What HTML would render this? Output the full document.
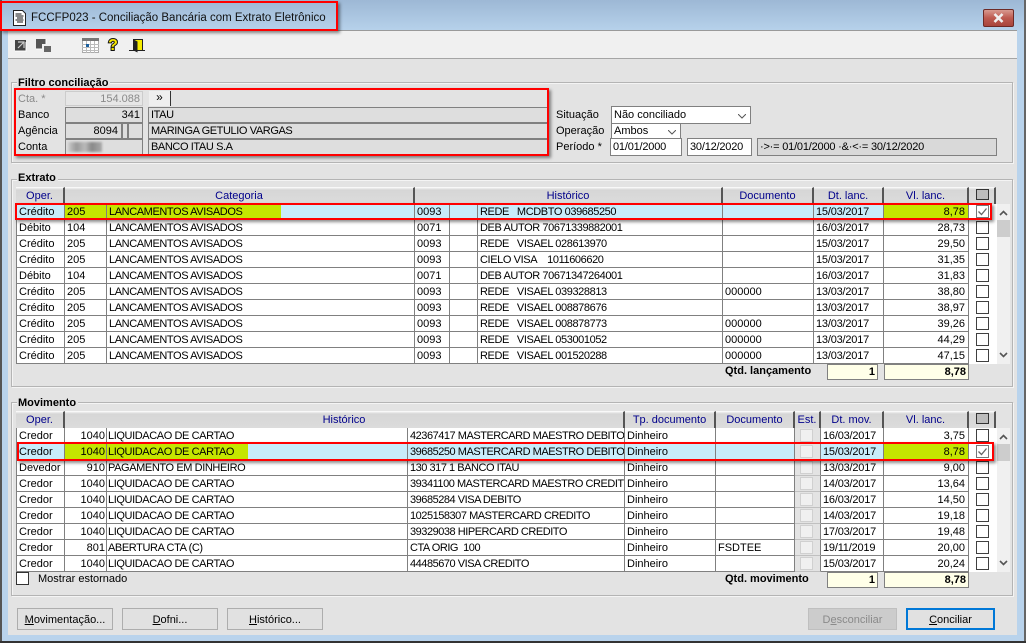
<!DOCTYPE html>
<html><head><meta charset="utf-8"><style>
*{box-sizing:border-box;margin:0;padding:0}
html,body{width:1026px;height:643px;overflow:hidden;background:#b9d3ec;font:11px "Liberation Sans",sans-serif;color:#000}
div,span,b,svg{position:absolute;white-space:nowrap}
#tb{left:0;top:0;width:1026px;height:31px;background:linear-gradient(#9db8d5,#b7d2eb)}
#body{left:8px;top:30px;width:1009px;height:605px;background:#e3e3e3;border-top:1px solid #9a9a9a}
#tool{left:8px;top:31px;width:1009px;height:28px;background:#f0f0f0;border-bottom:1px solid #a5a5a5}
.g{border:1px solid #b4b4b4;box-shadow:inset 1px 1px 0 #f4f4f4,1px 1px 0 #f4f4f4}
.lg{font-weight:bold;background:#e3e3e3;padding:0 2px 0 1px;line-height:13px;height:13px}
.rb{border:2px solid #f00;box-shadow:2px 2px 3px rgba(0,0,0,.45)}
.l{line-height:16px;height:14px}
.f{border:1px solid #808080;background:#dedede;line-height:15px;padding:0 2px;overflow:hidden}
.u{letter-spacing:-.4px}
.w{background:#fff}
.r{text-align:right}
.h{height:17px;line-height:16px;text-align:center;color:#00008b;background:linear-gradient(#f0f0f0 0,#d6d6d6 2px,#dcdcdc);border-right:2px solid #555;border-top:1px solid #f8f8f8}
.rw{left:0;width:1000px;height:16px}
.rw span{top:0;height:16px;line-height:17px;background:#fff;border-right:1px solid #808080;border-bottom:1px solid #808080;padding-left:2px;overflow:hidden}
.rw span:first-child{border-left:1px solid #808080}
#ex .rw span:nth-child(3),#ex .rw span:nth-child(6),#mv .rw span:nth-child(3){letter-spacing:-.4px}
#mv .rw span:nth-child(4){letter-spacing:-.47px}
.rw span:nth-child(8){letter-spacing:-.2px}
#ex .rw span:nth-child(1){left:16px;width:49px}
#ex .rw span:nth-child(2){left:65px;width:42px}
#ex .rw span:nth-child(3){left:107px;width:308px}
#ex .rw span:nth-child(4){left:415px;width:35px}
#ex .rw span:nth-child(5){left:450px;width:28px}
#ex .rw span:nth-child(6){left:478px;width:245px}
#ex .rw span:nth-child(7){left:723px;width:91px}
#ex .rw span:nth-child(8){left:814px;width:70px}
#ex .rw span:nth-child(9){left:884px;width:85px;text-align:right;padding-right:3px}
#mv .rw span:nth-child(1){left:16px;width:49px}
#mv .rw span:nth-child(2){left:65px;width:42px;text-align:right;padding-right:1px}
#mv .rw span:nth-child(3){left:107px;width:301px;padding-left:1px}
#mv .rw span:nth-child(4){left:408px;width:217px;padding-left:2px}
#mv .rw span:nth-child(5){left:625px;width:91px;padding-left:2px}
#mv .rw span:nth-child(6){left:716px;width:79px}
#mv .rw span:nth-child(7){left:795px;width:26px;background:#e3e3e3;border-bottom-color:#c0c0c0}
#mv .rw span:nth-child(8){left:821px;width:63px}
#mv .rw span:nth-child(9){left:884px;width:85px;text-align:right;padding-right:3px}
.rw span.s{background:#c8ecfa}
.rw span.y{background:linear-gradient(90deg,#c4e600 var(--p,100%),#c8ecfa var(--p,100%))}
.wh{background:#fff}
.ck{left:976px;width:13px;height:13px;background:#fff;border:1px solid #404040}
.sb{left:997px;width:13px;background:#f0f0f0}
.btn{top:608px;height:22px;border:1px solid #adadad;background:#e1e1e1;text-align:center;line-height:22px}
u{text-decoration:underline}
.sm{border:1px solid #808080;background:#ffffe8;font-weight:bold;text-align:right;padding-right:2px;line-height:14px;height:16px}
.ca{width:8px;height:5px}
.e{width:13px;height:13px;left:800px;background:#f0f0f0;border:1px solid #d0d0d0}
</style></head><body>
<div id="tb"></div>
<div style="left:0;top:0;width:2px;height:643px;background:#555"></div>
<div style="left:1024px;top:0;width:2px;height:643px;background:#666"></div>
<div style="left:0;top:641px;width:1026px;height:2px;background:#333"></div>
<div id="body"></div>
<div id="tool"></div>

<svg style="left:13px;top:10px" width="13" height="16" viewBox="0 0 13 16"><path d="M.5.500h9l3 3v12H.5z" fill="#fff" stroke="#222"/><path d="M2.500 4h6M2.500 6h8M4 8h6M2.500 10h8M4 12h6" stroke="#111"/></svg>
<div style="left:31px;top:11px;font-size:11.5px;line-height:15px;color:#111">FCCFP023 - Conciliação Bancária com Extrato Eletrônico</div>
<div style="left:983px;top:9px;width:31px;height:18px;border:1px solid #6d2a26;border-radius:2px;background:linear-gradient(#d89a90,#bd5a50 50%,#a8453c)"></div>
<svg style="left:991px;top:12px" width="15" height="12" viewBox="0 0 15 12"><path d="M3.500 2l8 8M11.500 2l-8 8" stroke="#f0f0f0" stroke-width="2.600"/></svg>
<div class="rb" style="left:0;top:1px;width:338px;height:30px"></div>

<svg style="left:14px;top:38px" width="14" height="16" viewBox="0 0 14 16"><rect x="1" y="2" width="11" height="11" fill="#444"/><path d="M1 13h11V4" fill="none" stroke="#fff"/><path d="M4 4h6v6M10 4L4 10" stroke="#ccc" stroke-width="1.200" fill="none"/></svg>
<svg style="left:35px;top:37px" width="17" height="16" viewBox="0 0 17 16"><path d="M1 2h10v5H7v5H1z" fill="#555"/><rect x="9" y="9" width="7" height="6" fill="#666"/><path d="M1 12h6M11 2v5" stroke="#fff"/></svg>
<svg style="left:82px;top:38px" width="17" height="15" viewBox="0 0 17 15"><rect x=".5" y=".5" width="16" height="14" fill="#fff" stroke="#aaa"/><rect x="0" y="0" width="17" height="3" fill="#777"/><path d="M4.500 3v12M8.500 3v12M12.500 3v12M0 6.500h17M0 9.500h17M0 12.500h17" stroke="#bbb"/><rect x="4" y="6" width="3" height="3" fill="#1b5f9e"/></svg>
<div style="left:106px;top:37px;font:bold 16px/17px 'Liberation Sans',sans-serif;color:#f7e600;-webkit-text-stroke:2px #111;paint-order:stroke fill;width:14px;text-align:center">?</div>
<svg style="left:129px;top:38px" width="16" height="16" viewBox="0 0 16 16"><path d="M4.500 1.500h9v11h-9z" fill="#f5ec00" stroke="#222"/><path d="M4.500 1.500l4 2v11l-4-2z" fill="#222"/><path d="M0 12.500h4M13 12.500h3" stroke="#222"/></svg>

<div class="g" style="left:11px;top:82px;width:1002px;height:81px"></div>
<div class="lg" style="left:17px;top:77px">Filtro conciliação</div>
<div class="l" style="left:18px;top:91px;color:#8a8a8a">Cta. *</div>
<div class="f r" style="left:65px;top:91px;width:78px;height:15px;color:#8a8a8a;background:#e6e6e6;border-color:#ccc">154.088</div>
<div style="left:149px;top:91px;width:22px;height:15px;background:#efefef;border-right:1px solid #333;text-align:center;line-height:13px;font-size:12px">»</div>
<div class="l" style="left:18px;top:107px">Banco</div>
<div class="f r" style="left:65px;top:107px;width:78px;height:16px">341</div>
<div class="f u" style="left:148px;top:107px;width:400px;height:16px">ITAU</div>
<div class="l" style="left:18px;top:123px">Agência</div>
<div class="f r" style="left:65px;top:123px;width:57px;height:16px;padding-right:3px">8094</div>
<div class="f" style="left:122px;top:123px;width:6px;height:16px"></div>
<div class="f" style="left:128px;top:123px;width:15px;height:16px"></div>
<div class="f u" style="left:148px;top:123px;width:400px;height:16px">MARINGA GETULIO VARGAS</div>
<div class="l" style="left:18px;top:139px">Conta</div>
<div class="f" style="left:65px;top:139px;width:78px;height:17px"></div>
<div class="f u" style="left:148px;top:139px;width:400px;height:17px;line-height:15px">BANCO ITAU S.A</div>
<div style="left:68px;top:142px;width:34px;height:10px;background:linear-gradient(90deg,#ccc,#999 25%,#bbb 50%,#888 70%,#aaa 100%);filter:blur(1px)"></div>
<div class="rb" style="left:14px;top:88px;width:535px;height:68px"></div>

<div class="l" style="left:556px;top:107px">Situação</div>
<div class="f w" style="left:611px;top:106px;width:140px;height:18px;line-height:16px">Não conciliado</div>
<svg class="ca" style="left:738px;top:114px" viewBox="0 0 8 5"><path d="M0 0l4 4 4-4" fill="none" stroke="#555"/></svg>
<div class="l" style="left:556px;top:123px">Operação</div>
<div class="f w" style="left:611px;top:123px;width:70px;height:16px;line-height:14px">Ambos</div>
<svg class="ca" style="left:668px;top:130px" viewBox="0 0 8 5"><path d="M0 0l4 4 4-4" fill="none" stroke="#555"/></svg>
<div class="l" style="left:556px;top:139px">Período *</div>
<div class="f w" style="left:610px;top:138px;width:72px;height:18px;line-height:17px;letter-spacing:-.2px">01/01/2000</div>
<div class="f w" style="left:687px;top:138px;width:65px;height:18px;line-height:17px;letter-spacing:-.2px">30/12/2020</div>
<div class="f" style="left:757px;top:138px;width:240px;height:18px;line-height:17px;background:#d9d9d9;letter-spacing:-.2px">·&gt;·= 01/01/2000 ·&amp;·&lt;·= 30/12/2020</div>

<div class="g" style="left:11px;top:179px;width:1002px;height:208px"></div>
<div class="lg" style="left:17px;top:172px">Extrato</div>
<div class="h" style="left:16px;top:187px;width:49px">Oper.</div>
<div class="h" style="left:65px;top:187px;width:350px">Categoria</div>
<div class="h" style="left:415px;top:187px;width:308px">Histórico</div>
<div class="h" style="left:723px;top:187px;width:91px">Documento</div>
<div class="h" style="left:814px;top:187px;width:70px">Dt. lanc.</div>
<div class="h" style="left:884px;top:187px;width:85px">Vl. lanc.</div>
<div class="h" style="left:969px;top:187px;width:27px"></div>
<div style="left:976px;top:189px;width:13px;height:11px;background:#bdbdbd;border:1px solid #333"></div>

<div class="wh" style="left:969px;top:204px;width:28px;height:160px"></div>
<div class="sb" style="top:204px;height:160px"></div>
<div style="left:997px;top:220px;width:13px;height:17px;background:#cdcdcd"></div>
<svg style="left:999px;top:210px" width="9" height="6" viewBox="0 0 9 6"><path d="M1 5l3.500-3.500L8 5" fill="none" stroke="#555" stroke-width="1.600"/></svg>
<svg style="left:999px;top:352px" width="9" height="6" viewBox="0 0 9 6"><path d="M1 1l3.500 3.500L8 1" fill="none" stroke="#555" stroke-width="1.600"/></svg>

<div id="ex" style="left:0;top:204px;width:1000px;height:160px">
<div class="rw" style="top:0"><span class="s">Crédito</span><span class="y">205</span><span class="y" style="--p:174px">LANCAMENTOS AVISADOS</span><span class="s">0093</span><span class="s"></span><span class="s">REDE &nbsp; MCDBTO 039685250</span><span class="s"></span><span class="s">15/03/2017</span><span class="y">8,78</span></div>
<div class="rw" style="top:16px"><span>Débito</span><span>104</span><span>LANCAMENTOS AVISADOS</span><span>0071</span><span></span><span>DEB AUTOR 70671339882001</span><span></span><span>16/03/2017</span><span>28,73</span></div>
<div class="rw" style="top:32px"><span>Crédito</span><span>205</span><span>LANCAMENTOS AVISADOS</span><span>0093</span><span></span><span>REDE &nbsp; VISAEL 028613970</span><span></span><span>15/03/2017</span><span>29,50</span></div>
<div class="rw" style="top:48px"><span>Crédito</span><span>205</span><span>LANCAMENTOS AVISADOS</span><span>0093</span><span></span><span>CIELO VISA &nbsp; &nbsp;1011606620</span><span></span><span>15/03/2017</span><span>31,35</span></div>
<div class="rw" style="top:64px"><span>Débito</span><span>104</span><span>LANCAMENTOS AVISADOS</span><span>0071</span><span></span><span>DEB AUTOR 70671347264001</span><span></span><span>16/03/2017</span><span>31,83</span></div>
<div class="rw" style="top:80px"><span>Crédito</span><span>205</span><span>LANCAMENTOS AVISADOS</span><span>0093</span><span></span><span>REDE &nbsp; VISAEL 039328813</span><span>000000</span><span>13/03/2017</span><span>38,80</span></div>
<div class="rw" style="top:96px"><span>Crédito</span><span>205</span><span>LANCAMENTOS AVISADOS</span><span>0093</span><span></span><span>REDE &nbsp; VISAEL 008878676</span><span></span><span>13/03/2017</span><span>38,97</span></div>
<div class="rw" style="top:112px"><span>Crédito</span><span>205</span><span>LANCAMENTOS AVISADOS</span><span>0093</span><span></span><span>REDE &nbsp; VISAEL 008878773</span><span>000000</span><span>13/03/2017</span><span>39,26</span></div>
<div class="rw" style="top:128px"><span>Crédito</span><span>205</span><span>LANCAMENTOS AVISADOS</span><span>0093</span><span></span><span>REDE &nbsp; VISAEL 053001052</span><span>000000</span><span>13/03/2017</span><span>44,29</span></div>
<div class="rw" style="top:144px"><span>Crédito</span><span>205</span><span>LANCAMENTOS AVISADOS</span><span>0093</span><span></span><span>REDE &nbsp; VISAEL 001520288</span><span>000000</span><span>13/03/2017</span><span>47,15</span></div>
</div>
<div class="ck" style="top:205px;border-color:#777"></div><svg style="left:977px;top:206px" width="11" height="11" viewBox="0 0 11 11"><path d="M1.500 5.500l3 3 5-6" fill="none" stroke="#666" stroke-width="1.300"/></svg>
<div class="ck" style="top:221px"></div><div class="ck" style="top:237px"></div><div class="ck" style="top:253px"></div><div class="ck" style="top:269px"></div><div class="ck" style="top:285px"></div><div class="ck" style="top:301px"></div><div class="ck" style="top:317px"></div><div class="ck" style="top:333px"></div><div class="ck" style="top:349px"></div>
<div class="rb" style="left:15px;top:203px;width:977px;height:17px"></div>
<b style="left:725px;top:364px;line-height:14px">Qtd. lançamento</b>
<div class="sm" style="left:827px;top:364px;width:51px">1</div>
<div class="sm" style="left:884px;top:364px;width:85px">8,78</div>

<div class="g" style="left:11px;top:402px;width:1002px;height:194px"></div>
<div class="lg" style="left:17px;top:397px">Movimento</div>
<div class="h" style="left:16px;top:411px;width:49px">Oper.</div>
<div class="h" style="left:65px;top:411px;width:560px">Histórico</div>
<div class="h" style="left:625px;top:411px;width:91px">Tp. documento</div>
<div class="h" style="left:716px;top:411px;width:79px">Documento</div>
<div class="h" style="left:795px;top:411px;width:26px">Est.</div>
<div class="h" style="left:821px;top:411px;width:63px">Dt. mov.</div>
<div class="h" style="left:884px;top:411px;width:85px">Vl. lanc.</div>
<div class="h" style="left:969px;top:411px;width:27px"></div>
<div style="left:976px;top:413px;width:13px;height:11px;background:#bdbdbd;border:1px solid #333"></div>

<div class="wh" style="left:969px;top:428px;width:28px;height:144px"></div>
<div class="sb" style="top:428px;height:144px"></div>
<div style="left:997px;top:444px;width:13px;height:17px;background:#cdcdcd"></div>
<svg style="left:999px;top:434px" width="9" height="6" viewBox="0 0 9 6"><path d="M1 5l3.500-3.500L8 5" fill="none" stroke="#555" stroke-width="1.600"/></svg>
<svg style="left:999px;top:560px" width="9" height="6" viewBox="0 0 9 6"><path d="M1 1l3.500 3.500L8 1" fill="none" stroke="#555" stroke-width="1.600"/></svg>

<div id="mv" style="left:0;top:428px;width:1000px;height:144px">
<div class="rw" style="top:0"><span>Credor</span><span>1040</span><span>LIQUIDACAO DE CARTAO</span><span>42367417 MASTERCARD MAESTRO DEBITO</span><span>Dinheiro</span><span></span><span></span><span>16/03/2017</span><span>3,75</span></div>
<div class="rw" style="top:16px"><span class="s">Credor</span><span class="y">1040</span><span class="y" style="--p:141px">LIQUIDACAO DE CARTAO</span><span class="s">39685250 MASTERCARD MAESTRO DEBITO</span><span class="s">Dinheiro</span><span class="s"></span><span></span><span class="s">15/03/2017</span><span class="y">8,78</span></div>
<div class="rw" style="top:32px"><span>Devedor</span><span>910</span><span>PAGAMENTO EM DINHEIRO</span><span>130 317 1 BANCO ITAU</span><span>Dinheiro</span><span></span><span></span><span>13/03/2017</span><span>9,00</span></div>
<div class="rw" style="top:48px"><span>Credor</span><span>1040</span><span>LIQUIDACAO DE CARTAO</span><span>39341100 MASTERCARD MAESTRO CREDITO</span><span>Dinheiro</span><span></span><span></span><span>14/03/2017</span><span>13,64</span></div>
<div class="rw" style="top:64px"><span>Credor</span><span>1040</span><span>LIQUIDACAO DE CARTAO</span><span>39685284 VISA DEBITO</span><span>Dinheiro</span><span></span><span></span><span>16/03/2017</span><span>14,50</span></div>
<div class="rw" style="top:80px"><span>Credor</span><span>1040</span><span>LIQUIDACAO DE CARTAO</span><span>1025158307 MASTERCARD CREDITO</span><span>Dinheiro</span><span></span><span></span><span>14/03/2017</span><span>19,18</span></div>
<div class="rw" style="top:96px"><span>Credor</span><span>1040</span><span>LIQUIDACAO DE CARTAO</span><span>39329038 HIPERCARD CREDITO</span><span>Dinheiro</span><span></span><span></span><span>17/03/2017</span><span>19,48</span></div>
<div class="rw" style="top:112px"><span>Credor</span><span>801</span><span>ABERTURA CTA (C)</span><span>CTA ORIG &nbsp;100</span><span>Dinheiro</span><span>FSDTEE</span><span></span><span>19/11/2019</span><span>20,00</span></div>
<div class="rw" style="top:128px"><span>Credor</span><span>1040</span><span>LIQUIDACAO DE CARTAO</span><span>44485670 VISA CREDITO</span><span>Dinheiro</span><span></span><span></span><span>15/03/2017</span><span>20,24</span></div>
</div>
<div class="e" style="top:429px"></div><div class="e" style="top:445px"></div><div class="e" style="top:461px"></div><div class="e" style="top:477px"></div><div class="e" style="top:493px"></div><div class="e" style="top:509px"></div><div class="e" style="top:525px"></div><div class="e" style="top:541px"></div><div class="e" style="top:557px"></div>
<div class="ck" style="top:429px"></div>
<div class="ck" style="top:445px;border-color:#777"></div><svg style="left:977px;top:446px" width="11" height="11" viewBox="0 0 11 11"><path d="M1.500 5.500l3 3 5-6" fill="none" stroke="#666" stroke-width="1.300"/></svg>
<div class="ck" style="top:461px"></div><div class="ck" style="top:477px"></div><div class="ck" style="top:493px"></div><div class="ck" style="top:509px"></div><div class="ck" style="top:525px"></div><div class="ck" style="top:541px"></div><div class="ck" style="top:557px"></div>
<div class="rb" style="left:17px;top:442px;width:977px;height:19px"></div>
<div style="left:16px;top:572px;width:13px;height:13px;background:#fff;border:1px solid #333"></div>
<div class="l" style="left:38px;top:571px">Mostrar estornado</div>
<b style="left:725px;top:572px;line-height:14px">Qtd. movimento</b>
<div class="sm" style="left:827px;top:572px;width:51px">1</div>
<div class="sm" style="left:884px;top:572px;width:85px">8,78</div>

<div class="btn" style="left:17px;width:96px"><u>M</u>ovimentação...</div>
<div class="btn" style="left:122px;width:96px"><u>D</u>ofni...</div>
<div class="btn" style="left:227px;width:96px"><u>H</u>istórico...</div>
<div class="btn" style="left:808px;width:89px;background:#ccc;color:#8a8a8a;border-color:#bfbfbf">D<u>e</u>sconciliar</div>
<div class="btn" style="left:906px;width:89px;border:2px solid #0078d7;line-height:20px"><u>C</u>onciliar</div>
</body></html>
